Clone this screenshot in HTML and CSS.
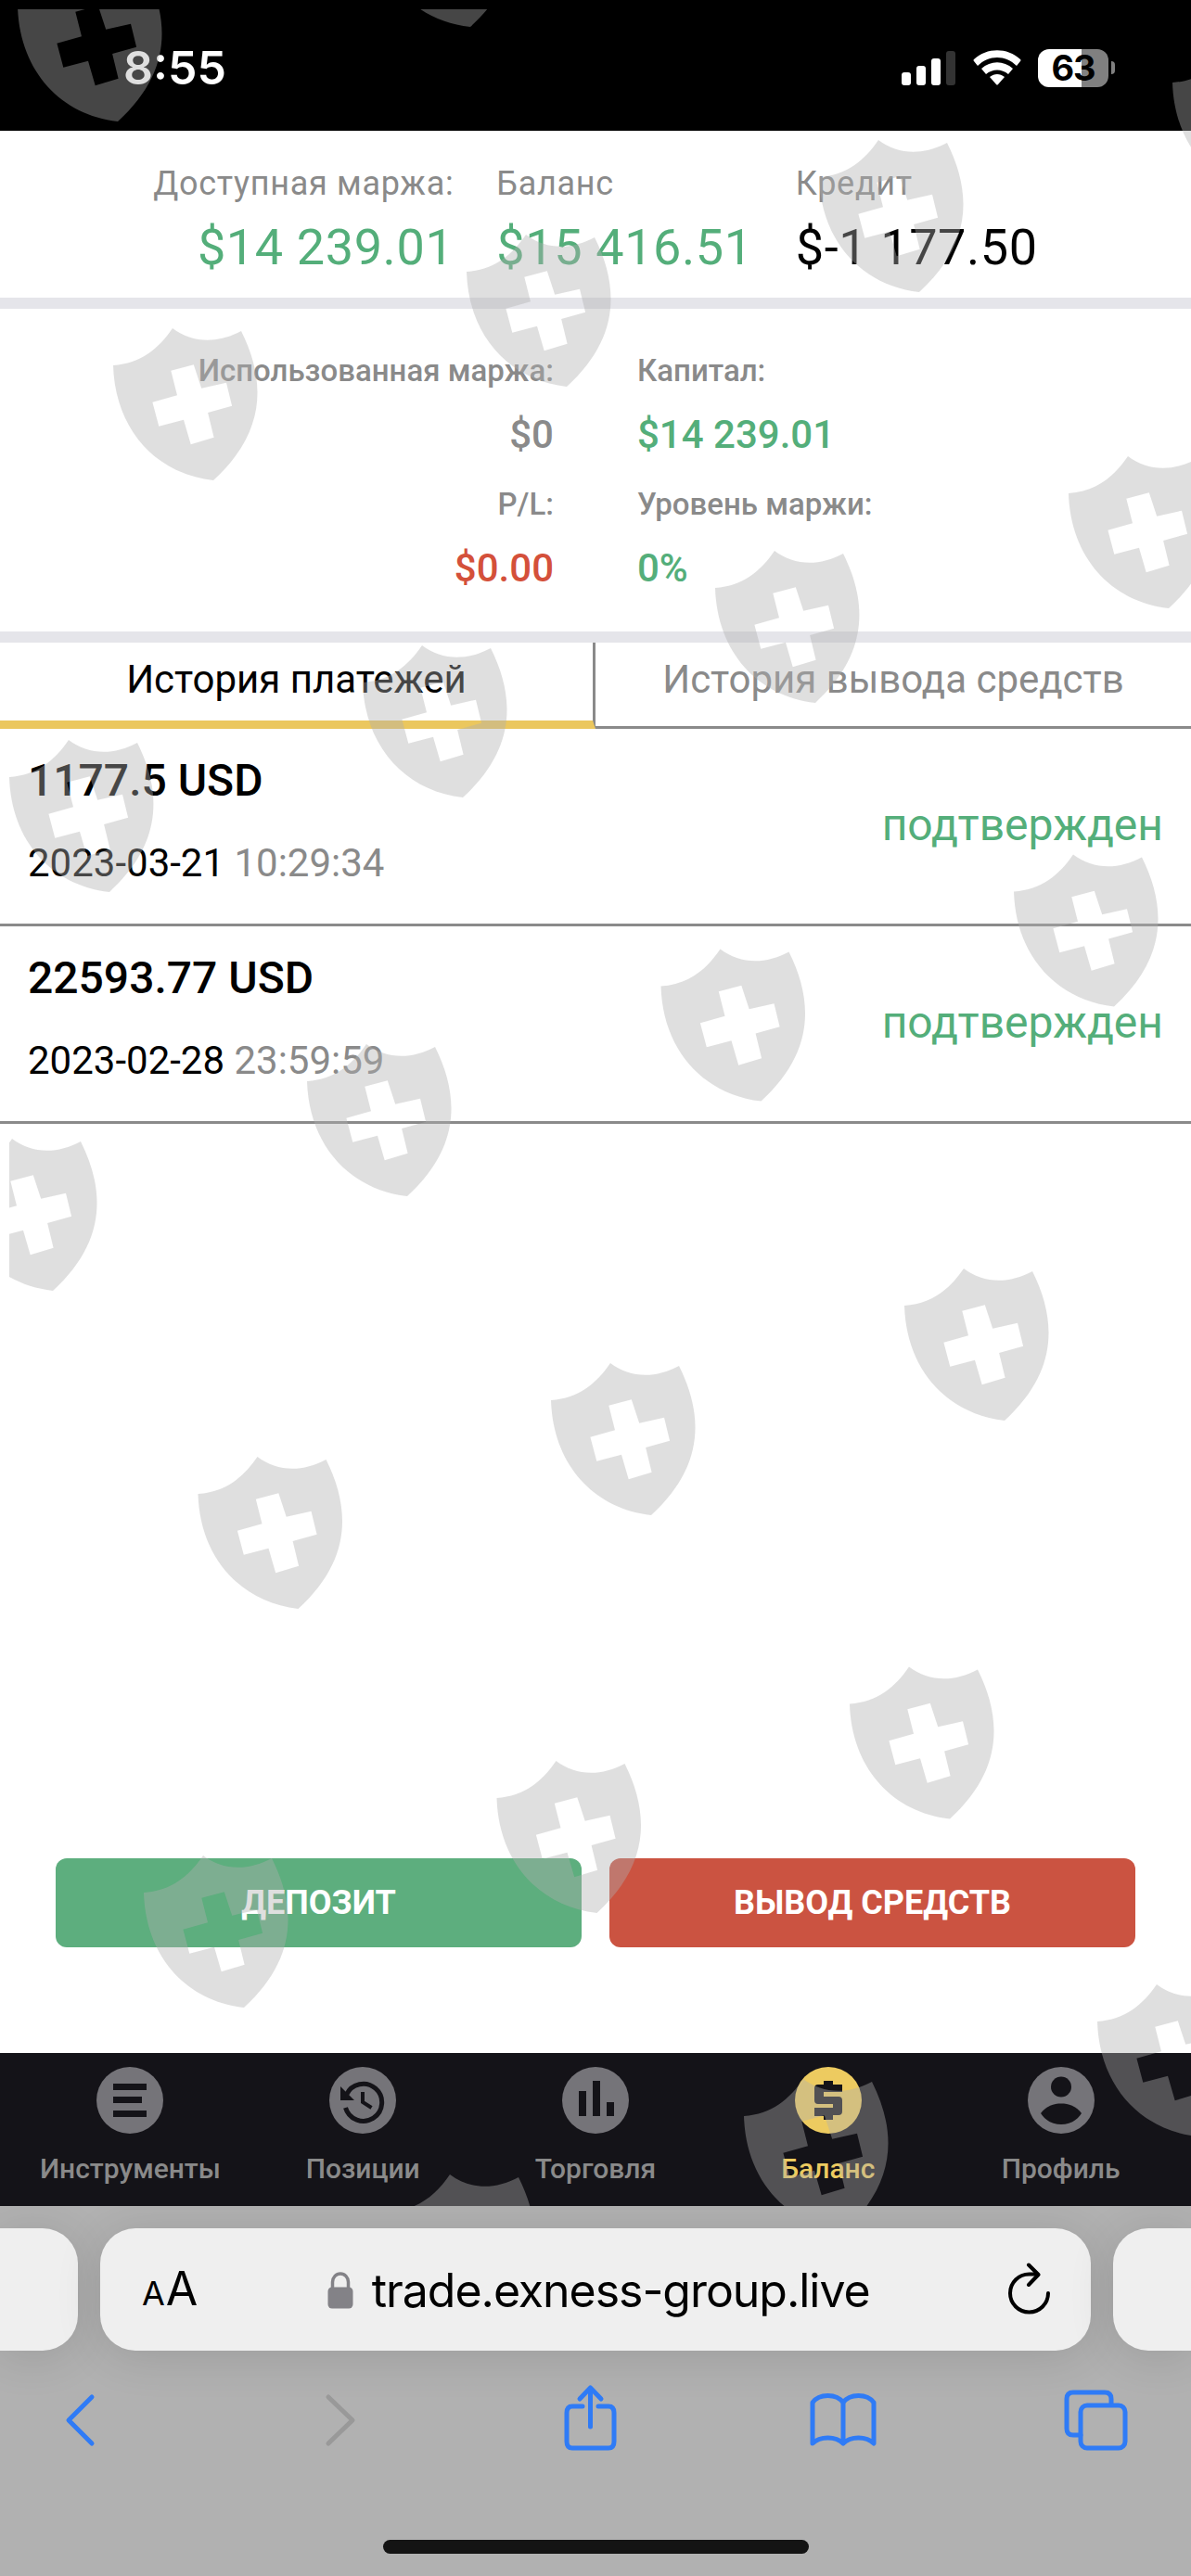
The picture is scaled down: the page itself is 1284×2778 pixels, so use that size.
FILE: index.html
```html
<!DOCTYPE html>
<html lang="ru">
<head>
  <meta charset="UTF-8" />
  <meta name="viewport" content="width=device-width, initial-scale=1.0"/>
  <title>Баланс</title>
  <link rel="stylesheet" href="styles.css">
</head>
<body>
  <div class="status-bar">
    <div class="clock">8:55</div>
    <div class="status-icons">
      <svg class="signal" width="58" height="38" viewBox="0 0 58 38">
        <rect x="0" y="24" width="10" height="14" rx="3" fill="#fff"/>
        <rect x="16" y="17" width="10" height="21" rx="3" fill="#fff"/>
        <rect x="32" y="9" width="10" height="29" rx="3" fill="#fff"/>
        <rect x="48" y="1" width="10" height="37" rx="3" fill="#333"/>
      </svg>
      <svg class="wifi" width="52" height="38" viewBox="0 0 52 38" fill="#fff">
        <path d="M1 12Q0 11 1 10C15 -3 37 -3 51 10Q52 11 51 12L47 17C35 5 17 5 5 17Z"/>
        <path d="M9 20C19 11 33 11 43 20L38 26C31 20 21 20 14 26Z"/>
        <path d="M18 29C23 25 29 25 34 29L27 37Q26 38 25 37Z"/>
      </svg>
      <div class="battery">63</div>
      <div class="battery-cap"></div>
    </div>
  </div>

  <div class="summary">
    <div class="summary-item right">
      <div class="summary-label">Доступная маржа:</div>
      <div class="summary-value green">$14 239.01</div>
    </div>
    <div class="summary-item">
      <div class="summary-label">Баланс</div>
      <div class="summary-value green">$15 416.51</div>
    </div>
    <div class="summary-item">
      <div class="summary-label">Кредит</div>
      <div class="summary-value">$-1 177.50</div>
    </div>
  </div>

  <div class="details">
    <div class="detail right">
      <div class="detail-label">Использованная маржа:</div>
      <div class="detail-value grey">$0</div>
    </div>
    <div class="detail">
      <div class="detail-label">Капитал:</div>
      <div class="detail-value green">$14 239.01</div>
    </div>
    <div class="detail right">
      <div class="detail-label">P/L:</div>
      <div class="detail-value red">$0.00</div>
    </div>
    <div class="detail">
      <div class="detail-label">Уровень маржи:</div>
      <div class="detail-value green">0%</div>
    </div>
  </div>

  <div class="tabs">
    <div class="tab active">История платежей</div>
    <div class="tab">История вывода средств</div>
  </div>

  <div class="history">
    <div class="payment">
      <div>
        <div class="amount">1177.5 USD</div>
        <div class="date">2023-03-21 <span class="grey">10:29:34</span></div>
      </div>
      <div class="payment-status">подтвержден</div>
    </div>
    <div class="payment">
      <div>
        <div class="amount">22593.77 USD</div>
        <div class="date">2023-02-28 <span class="grey">23:59:59</span></div>
      </div>
      <div class="payment-status">подтвержден</div>
    </div>
  </div>

  <div class="actions">
    <button class="btn deposit-btn">ДЕПОЗИТ</button>
    <button class="btn withdraw-btn">ВЫВОД СРЕДСТВ</button>
  </div>

  <div class="bottom-nav">
    <div class="nav-item">
      <svg class="nav-icon" viewBox="0 0 72 72">
        <circle cx="36" cy="36" r="36" fill="currentColor"/>
        <path class="cut" d="M18 18h36v7H18zM18 32h31v7H18zM18 47h36v7H18z"/>
      </svg>
      <span>Инструменты</span>
    </div>
    <div class="nav-item">
      <svg class="nav-icon" viewBox="0 0 72 72">
        <circle cx="36" cy="36" r="36" fill="currentColor"/>
        <path class="cut-line" stroke-width="5" d="M18.500 30A20 20 0 1 1 17.500 44"/>
        <path class="cut" d="M12 21V36H27Z"/>
        <path class="cut-line" stroke-width="4" d="M36 27V38L45.500 44"/>
      </svg>
      <span>Позиции</span>
    </div>
    <div class="nav-item">
      <svg class="nav-icon" viewBox="0 0 72 72">
        <circle cx="36" cy="36" r="36" fill="currentColor"/>
        <path class="cut" d="M18 26h8v27h-8zM33 15h8v38h-8zM48 38h8v15h-8z"/>
      </svg>
      <span>Торговля</span>
    </div>
    <div class="nav-item active">
      <svg class="nav-icon" viewBox="0 0 72 72">
        <circle cx="36" cy="36" r="36" fill="currentColor"/>
        <path class="cut" d="M31 15h10v4h10v8H31v5h16q4 0 4 4v12q0 4-4 4h-6v5H31v-4H21v-9h20v-4H25q-4 0-4-4V23q0-4 4-4h6z"/>
      </svg>
      <span>Баланс</span>
    </div>
    <div class="nav-item">
      <svg class="nav-icon" viewBox="0 0 72 72">
        <circle cx="36" cy="36" r="36" fill="currentColor"/>
        <circle class="cut" cx="36" cy="21.500" r="11"/>
        <path class="cut" d="M14 50C20 42 28 39.500 36 39.500S52 42 58 50C53 58 45 62 36 62S19 58 14 50Z"/>
      </svg>
      <span>Профиль</span>
    </div>
  </div>

  <div class="browser">
    <div class="address-row">
      <div class="side-page left"></div>
      <div class="address">
        <div class="text-size"><small>A</small>A</div>
        <div class="url">
          <svg width="28" height="40" viewBox="0 0 28 40">
            <path d="M5.500 18V11a8.500 9 0 0 1 17 0V18" fill="none" stroke="#838287" stroke-width="3.500"/>
            <rect x="0.500" y="16.500" width="27" height="23" rx="4.500" fill="#838287"/>
          </svg>
          <span>trade.exness-group.live</span>
        </div>
        <svg class="reload" width="46" height="56" viewBox="0 0 46 56" fill="none" stroke="#000" stroke-width="4" stroke-linecap="round" stroke-linejoin="round">
          <path d="M43 33A20.500 20.500 0 1 1 22.500 12.500H31"/>
          <path d="M22 2.500L32.500 13L22 24"/>
        </svg>
      </div>
      <div class="side-page next"></div>
    </div>
    <div class="toolbar">
      <svg viewBox="0 0 80 80"><path d="M53 15L28 40L53 65"/></svg>
      <svg class="disabled" viewBox="0 0 80 80"><path d="M34 15L60 40L34 65"/></svg>
      <svg viewBox="0 0 80 80">
        <path d="M34 25H23Q17 25 17 32V63Q17 70 23 70H62Q68 70 68 63V32Q68 25 62 25H51"/>
        <path d="M42.500 47V6M31 17L42.500 5L54 17"/>
      </svg>
      <svg viewBox="0 0 80 80">
        <path d="M42 65V21C35 11 16 11 9 21V65C17 57 34 57 42 65C50 57 67 57 75 65V21C68 11 49 11 42 21"/>
      </svg>
      <svg viewBox="0 0 80 80">
        <path d="M24 56H16Q9 56 9 49V17Q9 10 16 10H50Q57 10 57 17V23"/>
        <rect x="24" y="24" width="48" height="46" rx="7"/>
      </svg>
    </div>
    <div class="home-indicator"></div>
  </div>

  <!-- shield pattern over the page -->
  <svg class="shields" viewBox="10 10 1274 2369">
    <defs>
      <path id="shield" fill-rule="evenodd" d="M0 40C30 38 49 22 64 0C85 16 112 17 138 3C165 57 165 112 108 164C46 157 2 109 0 40ZM62.300 45.700L69 72.300L42.400 79.700L49.300 105.700L76 98.700L83.700 125.300L108.600 117.700L102.100 91L128.100 83.700L122 58.700L95.200 64.700L86.800 39.300Z"/>
    </defs>
    <use href="#shield" x="19" y="-33"/>
    <use href="#shield" x="399" y="-135"/>
    <use href="#shield" x="1264" y="49"/>
    <use href="#shield" x="883" y="151"/>
    <use href="#shield" x="503" y="253"/>
    <use href="#shield" x="122" y="354"/>
    <use href="#shield" x="1152" y="492"/>
    <use href="#shield" x="771" y="594"/>
    <use href="#shield" x="391" y="696"/>
    <use href="#shield" x="10" y="798"/>
    <use href="#shield" x="1093" y="921.500"/>
    <use href="#shield" x="712.500" y="1023.500"/>
    <use href="#shield" x="331" y="1126"/>
    <use href="#shield" x="-51" y="1228"/>
    <use href="#shield" x="975" y="1368"/>
    <use href="#shield" x="594" y="1470"/>
    <use href="#shield" x="213.500" y="1571"/>
    <use href="#shield" x="916" y="1797.500"/>
    <use href="#shield" x="535.500" y="1899"/>
    <use href="#shield" x="155" y="2001"/>
    <use href="#shield" x="1183" y="2140"/>
    <use href="#shield" x="802" y="2242"/>
    <use href="#shield" x="421" y="2345"/>
  </svg>
</body>
</html>
```
FILE: styles.css
```css
* {
  box-sizing: border-box;
}

body {
  position: relative;
  margin: 0;
  width: 1284px;
  height: 2778px;
  overflow: hidden;
  display: flex;
  flex-direction: column;
  font-family: Roboto, sans-serif;
  background-color: #fff;
  color: #000;
}

.right {
  text-align: right;
}

.green {
  color: #54ae7a;
}

.red {
  color: #d4503a;
}

.grey {
  color: #8a8a8a;
}

/* phone status bar */
.status-bar {
  height: 141px;
  padding: 45px 82px 0 133px;
  display: flex;
  justify-content: space-between;
  background-color: #000;
  color: #fff;
  font-family: Inter, sans-serif;
}

.clock {
  height: 56px;
  line-height: 56px;
  font-size: 50px;
  font-weight: 600;
}

.status-icons {
  display: flex;
  height: 56px;
  align-items: center;
}

.wifi {
  margin: 0 18px 0 19px;
}

.battery {
  width: 76px;
  height: 41px;
  border-radius: 12px;
  background: linear-gradient(to right, #fff 47px, #808080 47px);
  color: #000;
  font-size: 38px;
  font-weight: 700;
  line-height: 41px;
  text-align: center;
  letter-spacing: -1px;
}

.battery-cap {
  width: 4px;
  height: 14px;
  margin-left: 3px;
  border-radius: 0 6px 6px 0;
  background-color: #808080;
}

/* account totals */
.summary {
  height: 192px;
  padding-top: 30px;
  display: flex;
  justify-content: center;
  gap: 46px;
  border-bottom: 12px solid #e5e5ea;
}

.summary-label {
  font-size: 36px;
  line-height: 54px;
  color: #8a8a8a;
  letter-spacing: 0.7px;
}

.summary-value {
  font-size: 54px;
  line-height: 84px;
  letter-spacing: 0.6px;
}

.details {
  height: 360px;
  padding-top: 43px;
  display: grid;
  grid-template-columns: 597px 1fr;
  grid-auto-rows: 136px;
  gap: 8px 90px;
  border-bottom: 12px solid #e5e5ea;
  font-weight: 500;
}

.detail-label {
  font-size: 33px;
  line-height: 48px;
  color: #8a8a8a;
}

.detail-value {
  font-size: 42px;
  line-height: 90px;
}

.tabs {
  height: 93px;
  display: flex;
}

.tab {
  width: 642px;
  border-bottom: 3px solid #8a8a8a;
  color: #8a8a8a;
  font-size: 42px;
  line-height: 80px;
  text-align: center;
}

.tab.active {
  color: #000;
  border-right: 3px solid #8a8a8a;
  border-bottom: 9px solid #ebc75e;
}

/* payments */
.history {
  flex: 1;
}

.payment {
  height: 213px;
  padding: 0 30px;
  display: flex;
  justify-content: space-between;
  border-bottom: 3px solid #8a8a8a;
}

.amount {
  margin-top: 20px;
  font-size: 48px;
  font-weight: 500;
  line-height: 72px;
}

.date {
  margin-top: 23px;
  font-size: 42px;
  line-height: 60px;
}

.payment-status {
  font-size: 48px;
  line-height: 208px;
  color: #54ae7a;
}

.actions {
  height: 210px;
  padding: 0 60px;
  display: flex;
  gap: 30px;
}

.btn {
  flex: 1;
  height: 96px;
  border: none;
  border-radius: 12px;
  color: #fff;
  font-family: inherit;
  font-size: 36px;
  font-weight: 700;
}

.deposit-btn {
  background-color: #5dae7e;
}

.withdraw-btn {
  background-color: #cb5341;
}

/* app navigation */
.bottom-nav {
  height: 165px;
  padding: 15px 15px 0;
  display: grid;
  grid-template-columns: repeat(5, 1fr);
  background-color: #141318;
}

.nav-item {
  display: flex;
  flex-direction: column;
  align-items: center;
  gap: 18px;
  color: #8a8a8a;
  font-size: 30px;
  font-weight: 500;
  line-height: 40px;
}

.nav-icon {
  width: 72px;
  height: 72px;
  color: #757479;
}

.nav-item.active,
.nav-item.active .nav-icon {
  color: #edcb60;
}

.cut {
  fill: #141318;
}

.cut-line {
  fill: none;
  stroke: #141318;
}

/* browser chrome */
.browser {
  height: 399px;
  padding-top: 24px;
  overflow: hidden;
  background-color: #b1b1b1;
  font-family: Inter, sans-serif;
}

.address-row {
  display: flex;
  gap: 24px;
}

.side-page,
.address {
  height: 132px;
  background-color: #efefef;
  box-shadow: 0 6px 50px rgba(0, 0, 0, 0.12);
}

.side-page {
  width: 84px;
}

.side-page.left {
  border-radius: 0 38px 38px 0;
}

.side-page.next {
  border-radius: 38px 0 0 38px;
}

.address {
  flex: 1;
  padding: 0 43px 0 45px;
  display: flex;
  align-items: center;
  justify-content: space-between;
  border-radius: 38px;
}

.text-size {
  margin-top: 3px;
  font-size: 50px;
  line-height: 60px;
  letter-spacing: -2px;
}

.text-size small {
  font-size: 36px;
  margin-right: 3px;
}

.url {
  display: flex;
  align-items: center;
  gap: 20px;
  margin: 2px 8px 0 0;
  font-size: 50px;
  line-height: 60px;
  letter-spacing: -1.05px;
}

.reload {
  margin-top: -2px;
}

.toolbar {
  height: 80px;
  margin-top: 35px;
  padding: 0 63px 0 46px;
  display: flex;
  justify-content: space-between;
}

.toolbar svg {
  width: 80px;
  height: 80px;
  fill: none;
  stroke: #2f7bf6;
  stroke-width: 5;
  stroke-linecap: round;
  stroke-linejoin: round;
}

.toolbar .disabled {
  stroke: #999;
}

.home-indicator {
  width: 459px;
  height: 15px;
  margin: 89px auto 0;
  border-radius: 8px;
  background-color: #141414;
}

.shields {
  position: absolute;
  left: 10px;
  top: 10px;
  width: 1274px;
  height: 2369px;
  fill: rgba(175, 175, 175, 0.4);
  pointer-events: none;
}
```
